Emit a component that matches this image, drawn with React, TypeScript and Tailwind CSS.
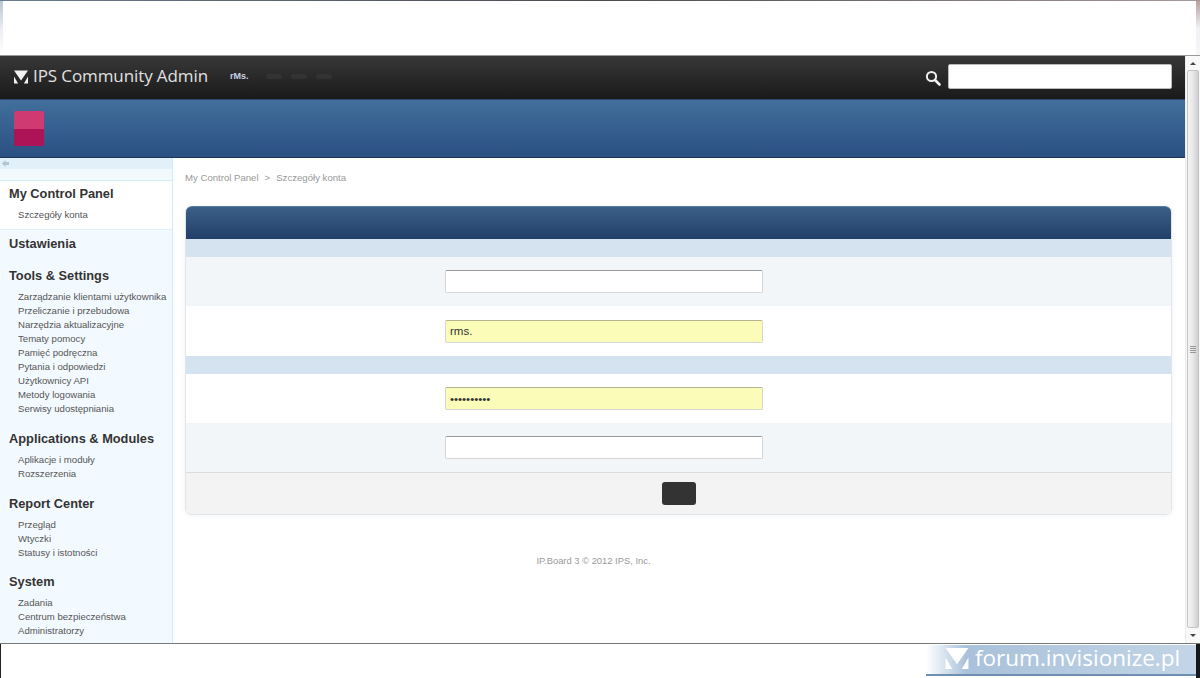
import React from "react";

const Logo = ({ w, h, cls }: { w: number; h: number; cls: string }) => (
  <svg width={w} height={h} viewBox="0 0 24 22" className={cls} fill="currentColor">
    <path d="M0 0H24L12 17Z" />
    <path d="M0 10L7 22H0Z" />
    <path d="M24 10L17 22H24Z" />
  </svg>
);

const Heading = ({ children, cls = "" }: { children: React.ReactNode; cls?: string }) => (
  <div className={`pl-[9px] text-[12.8px] leading-[16px] font-bold text-[#333] ${cls}`}>{children}</div>
);

const Items = ({ items, cls = "" }: { items: string[]; cls?: string }) => (
  <ul className={`pl-[18px] text-[9.6px] leading-[14px] text-[#555] whitespace-nowrap ${cls}`}>
    {items.map((t) => (
      <li key={t}>{t}</li>
    ))}
  </ul>
);

const Input = ({ value, yellow, password }: { value?: string; yellow?: boolean; password?: boolean }) => (
  <input
    readOnly
    type={password ? "password" : "text"}
    value={value ?? ""}
    className={`w-[318px] h-[23px] rounded-[2px] border border-[#d5d5d5] px-[4px] text-[11.5px] text-[#333] outline-none ${
      yellow ? "bg-[#fafcb8] border-t-[#b5b58f]" : "bg-white border-t-[#999]"
    }`}
  />
);

const Row = ({ children, cls }: { children: React.ReactNode; cls: string }) => (
  <div className={`flex items-center pl-[259px] ${cls}`}>{children}</div>
);

export default function App() {
  return (
    <div className="w-[1200px] h-[678px] flex flex-col overflow-hidden bg-white font-['Liberation_Sans',Arial,sans-serif]">
      {/* browser strip above the page */}
      <div className="h-[55px] flex flex-col shrink-0">
        <div className="h-[1px] bg-gradient-to-r from-[#6b7c8e] via-[#4a4a4f] to-[#a89a98]" />
        <div className="flex-1 flex">
          <div className="w-[3px] bg-gradient-to-b from-[#b9c6d6] via-[#e9edf2] to-[#ffffff]" />
          <div className="flex-1 bg-white" />
          <div className="w-[4px] bg-gradient-to-b from-[#b9a0a0] via-[#eef1f5] to-[#f6f7f9]" />
        </div>
      </div>

      <div className="h-[588px] flex shrink-0 border-t border-[#9a9a9a]">
        <div className="w-[1185px] flex flex-col">
          {/* top bar */}
          <header className="h-[43px] shrink-0 flex items-center bg-gradient-to-b from-[#383838] to-[#1a1a1a] pl-[14px] pr-[13px] pb-[2px]">
            <Logo w={14} h={14} cls="text-[#f2f2f2]" />
            <span className="ml-[5px] mb-[2px] font-['Open_Sans',sans-serif] text-[17px] tracking-[-0.1px] text-[#e0e0e0] whitespace-nowrap">
              IPS Community Admin
            </span>
            <span className="ml-[22px] text-[9px] font-bold text-[#c5d3e6] whitespace-nowrap">rMs.</span>
            <div className="ml-[18px] flex gap-[9px]">
              <div className="w-[16px] h-[5px] rounded-[3px] bg-[#333]" />
              <div className="w-[16px] h-[5px] rounded-[3px] bg-[#333]" />
              <div className="w-[16px] h-[5px] rounded-[3px] bg-[#333]" />
            </div>
            <div className="ml-auto flex items-center gap-[7px]">
              <svg width="16" height="16" viewBox="0 0 16 16" fill="none" stroke="#f0f0f0" className="mt-[2px]">
                <circle cx="6.5" cy="6.5" r="4.6" strokeWidth="2" />
                <path d="M10 10L14.5 14.5" strokeWidth="2.6" strokeLinecap="round" />
              </svg>
              <div className="w-[224px] h-[25px] bg-white rounded-[2px] border border-[#bbb]" />
            </div>
          </header>

          {/* blue band */}
          <div className="h-[59px] shrink-0 flex items-center pl-[14px] bg-gradient-to-b from-[#426f9b] to-[#2a5082] border-t border-[#2c4a70] border-b border-b-[#1d3554]">
            <div className="w-[30px] h-[35px] rounded-[2px] overflow-hidden flex flex-col">
              <div className="flex-1 bg-[#d03a72]" />
              <div className="flex-1 bg-[#ad1457]" />
            </div>
          </div>

          <div className="flex-1 flex min-h-0">
            {/* sidebar */}
            <aside className="w-[173px] shrink-0 bg-[#f3faff] border-r border-[#cfeaf8] overflow-hidden">
              <div className="h-[11px] bg-[#e2f0f9] flex items-center pl-[2px]">
                <svg width="7" height="7" viewBox="0 0 7 7" fill="#b3c5d3">
                  <path d="M0 3.5L3.5 0V2H7V5H3.5V7Z" />
                </svg>
              </div>
              <div className="h-[11px] bg-[#f2f9fd]" />
              <div className="h-[50px] bg-white border-t border-[#cfeef6] border-b border-b-[#dff2fb] pt-[5px]">
                <Heading>My Control Panel</Heading>
                <Items cls="mt-[6px]" items={["Szczegóły konta"]} />
              </div>
              <Heading cls="mt-[6px]">Ustawienia</Heading>
              <Heading cls="mt-[16px]">Tools &amp; Settings</Heading>
              <Items
                cls="mt-[6px]"
                items={[
                  "Zarządzanie klientami użytkownika",
                  "Przeliczanie i przebudowa",
                  "Narzędzia aktualizacyjne",
                  "Tematy pomocy",
                  "Pamięć podręczna",
                  "Pytania i odpowiedzi",
                  "Użytkownicy API",
                  "Metody logowania",
                  "Serwisy udostępniania",
                ]}
              />
              <Heading cls="mt-[15px]">Applications &amp; Modules</Heading>
              <Items cls="mt-[6px]" items={["Aplikacje i moduły", "Rozszerzenia"]} />
              <Heading cls="mt-[15px]">Report Center</Heading>
              <Items cls="mt-[6px]" items={["Przegląd", "Wtyczki", "Statusy i istotności"]} />
              <Heading cls="mt-[14px]">System</Heading>
              <Items cls="mt-[6px]" items={["Zadania", "Centrum bezpieczeństwa", "Administratorzy"]} />
            </aside>

            {/* content */}
            <main className="flex-1 bg-white pl-[12px] pr-[13px]">
              <div className="mt-[14px] h-[12px] flex items-center gap-[6px] text-[9.6px] text-[#999] whitespace-nowrap">
                <span>My Control Panel</span>
                <span>&gt;</span>
                <span>Szczegóły konta</span>
              </div>
              <section className="mt-[22px] rounded-[6px] border-x border-b border-[#dfe6ee] shadow-[0_0_6px_rgba(0,0,0,0.06)]">
                <div className="h-[33px] rounded-t-[6px] bg-gradient-to-b from-[#3b6088] to-[#213f69] border-t border-[#577a9e]" />
                <div className="h-[18px] bg-[#d5e2ef]" />
                <Row cls="h-[49px] bg-[#f3f6f9]">
                  <Input />
                </Row>
                <Row cls="h-[50px] bg-white">
                  <Input value="rms." yellow />
                </Row>
                <div className="h-[18px] bg-[#d5e2ef]" />
                <Row cls="h-[49px] bg-white">
                  <Input value="aaaaaaaaaa" yellow password />
                </Row>
                <Row cls="h-[49px] bg-[#f3f6f9]">
                  <Input />
                </Row>
                <div className="h-[42px] bg-[#f3f3f3] border-t border-[#dcdcdc] flex items-center justify-center">
                  <div className="w-[34px] h-[23px] rounded-[3px] bg-[#333]" />
                </div>
              </section>
              <div className="mt-[39px] mr-[170px] text-center text-[9.4px] leading-[14px] text-[#999]">
                IP.Board 3 © 2012 IPS, Inc.
              </div>
            </main>
          </div>
        </div>

        {/* scrollbar */}
        <div className="w-[15px] flex flex-col items-center bg-[#f8f8f8] border-l border-[#ececec]">
          <div className="h-[14px] flex items-center justify-center">
            <div className="w-0 h-0 border-x-[3px] border-x-transparent border-b-[3px] border-b-[#444]" />
          </div>
          <div className="flex-1 w-[12px] rounded-[2px] border border-[#c4c4c4] bg-gradient-to-r from-[#f4f4f4] via-[#e8e8e8] to-[#cfcfd3] flex flex-col items-center justify-center gap-[1px]">
            <div className="w-[6px] h-[1px] bg-[#999]" />
            <div className="w-[6px] h-[1px] bg-[#999]" />
            <div className="w-[6px] h-[1px] bg-[#999]" />
            <div className="w-[6px] h-[1px] bg-[#999]" />
          </div>
          <div className="h-[15px] flex items-center justify-center">
            <div className="w-0 h-0 border-x-[3px] border-x-transparent border-t-[3px] border-t-[#444]" />
          </div>
        </div>
      </div>

      {/* bottom strip */}
      <div className="h-[35px] shrink-0 flex border-t border-[#777] bg-white">
        <div className="w-[1px] bg-[#222]" />
        <div className="flex-1 flex justify-end pt-[1px]">
          <div className="w-[270px] h-[31px] flex items-center pl-[19px] pb-[3px] bg-gradient-to-r from-[#ffffff] via-[#a9c1da] via-[15%] to-[#c3d5e6] border-b-2 border-[#6f8fb0]">
            <Logo w={24} h={21} cls="text-white" />
            <span className="ml-[6px] font-['Open_Sans',sans-serif] text-[22.5px] leading-[26px] text-white whitespace-nowrap">
              forum.invisionize.pl
            </span>
          </div>
        </div>
        <div className="w-[4px] bg-[#15181c]" />
      </div>
    </div>
  );
}
